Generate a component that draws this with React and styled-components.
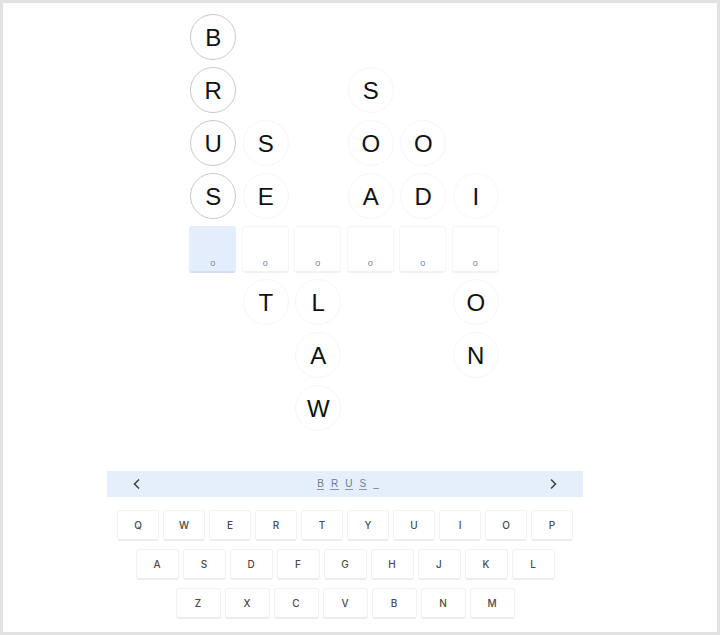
import React from "react";
import styled, { createGlobalStyle } from "styled-components";

const Global = createGlobalStyle`
  html, body { margin: 0; padding: 0; background: #ffffff; }
  body { font-family: "Liberation Sans", Arial, sans-serif; }
  * { box-sizing: border-box; }
`;

const Frame = styled.div`
  width: 720px;
  height: 635px;
  border: 3px solid #e2e2e2;
  background: #fff;
  display: flex;
  flex-direction: column;
  align-items: center;
  padding: 11px 30px 0 0;
  overflow: hidden;
`;

const Board = styled.div`
  display: grid;
  grid-template-columns: repeat(6, 46px);
  grid-template-rows: repeat(8, 46px);
  column-gap: 6.5px;
  row-gap: 7px;
  margin-right: 1px;
`;

const Bubble = styled.div`
  grid-column: ${(p) => p.$col + 1};
  grid-row: ${(p) => p.$row + 1};
  width: 46px;
  height: 46px;
  border-radius: 50%;
  border: 1px solid ${(p) => (p.$picked ? "#c9c9c9" : "#f6f6f6")};
  display: flex;
  align-items: center;
  justify-content: center;
  font-family: "Liberation Sans", Arial, sans-serif;
  font-size: 24px;
  color: #111;
  padding-top: 1px;
`;

const Slot = styled.div`
  grid-column: ${(p) => p.$col + 1};
  grid-row: 5;
  width: 47px;
  height: 47px;
  margin-left: -1px;
  border-radius: 3px;
  background: ${(p) => (p.$active ? "#e4edfb" : "#ffffff")};
  border: 1px solid ${(p) => (p.$active ? "#e4edfb" : "#f6f6f6")};
  border-bottom: 2px solid ${(p) => (p.$active ? "#d3dff2" : "#f2f2f2")};
  display: flex;
  align-items: flex-end;
  justify-content: center;
  padding-bottom: 3px;
  font-family: "Liberation Sans", Arial, sans-serif;
  font-size: 9px;
  color: #7d8590;
`;

const Keyboard = styled.div`
  margin-top: 40px;
  display: flex;
  flex-direction: column;
  align-items: center;
`;

const WordBar = styled.div`
  width: 476px;
  height: 26px;
  background: #e5eefb;
  display: flex;
  align-items: center;
  justify-content: space-between;
  padding: 0 25px 0 25px;
  color: #333;
`;

const Chevron = styled.svg`
  width: 10px;
  height: 12px;
  display: block;
`;

const Word = styled.div`
  display: flex;
  gap: 6px;
  font-family: "Liberation Sans", Arial, sans-serif;
  font-size: 10px;
  color: #6f7c90;
  margin-left: 6px;
`;

const WordLetter = styled.span`
  border-bottom: 1px solid ${(p) => (p.$blank ? "transparent" : "#8a96a8")};
  line-height: 11px;
  padding: 0 0.5px;
`;

const KeyRow = styled.div`
  display: flex;
  gap: 4px;
  margin-top: ${(p) => p.$top}px;
`;

const Key = styled.div`
  width: ${(p) => p.$w}px;
  height: 31px;
  background: #fff;
  border: 1px solid #f2f2f2;
  border-bottom: 2px solid #ececec;
  border-radius: 3px;
  display: flex;
  align-items: center;
  justify-content: center;
  font-family: Inter, "Liberation Sans", sans-serif;
  font-size: 10px;
  font-weight: 500;
  color: #4a4a4a;
`;

const picked = [
  ["B", 0, 0],
  ["R", 0, 1],
  ["U", 0, 2],
  ["S", 0, 3],
];

const loose = [
  ["S", 1, 2],
  ["E", 1, 3],
  ["S", 3, 1],
  ["O", 3, 2],
  ["A", 3, 3],
  ["O", 4, 2],
  ["D", 4, 3],
  ["I", 5, 3],
  ["T", 1, 5],
  ["L", 2, 5],
  ["A", 2, 6],
  ["W", 2, 7],
  ["O", 5, 5],
  ["N", 5, 6],
];

const rows = [
  { keys: "QWERTYUIOP", w: 42, top: 13 },
  { keys: "ASDFGHJKL", w: 43, top: 8 },
  { keys: "ZXCVBNM", w: 45, top: 8 },
];

export default function App() {
  return (
    <>
      <Global />
      <Frame>
        <Board>
          {picked.map(([ch, c, r]) => (
            <Bubble key={`p${c}${r}`} $col={c} $row={r} $picked>
              {ch}
            </Bubble>
          ))}
          {loose.map(([ch, c, r]) => (
            <Bubble key={`l${c}${r}`} $col={c} $row={r}>
              {ch}
            </Bubble>
          ))}
          {[0, 1, 2, 3, 4, 5].map((c) => (
            <Slot key={`s${c}`} $col={c} $active={c === 0}>
              o
            </Slot>
          ))}
        </Board>
        <Keyboard>
          <WordBar>
            <Chevron viewBox="0 0 10 12">
              <path d="M7 1.5 L2.5 6 L7 10.5" fill="none" stroke="#444" strokeWidth="1.6" />
            </Chevron>
            <Word>
              {"BRUS".split("").map((ch, i) => (
                <WordLetter key={i}>{ch}</WordLetter>
              ))}
              <WordLetter $blank>_</WordLetter>
            </Word>
            <Chevron viewBox="0 0 10 12">
              <path d="M3 1.5 L7.5 6 L3 10.5" fill="none" stroke="#444" strokeWidth="1.6" />
            </Chevron>
          </WordBar>
          {rows.map((row, i) => (
            <KeyRow key={i} $top={row.top}>
              {row.keys.split("").map((k) => (
                <Key key={k} $w={row.w}>
                  {k}
                </Key>
              ))}
            </KeyRow>
          ))}
        </Keyboard>
      </Frame>
    </>
  );
}
